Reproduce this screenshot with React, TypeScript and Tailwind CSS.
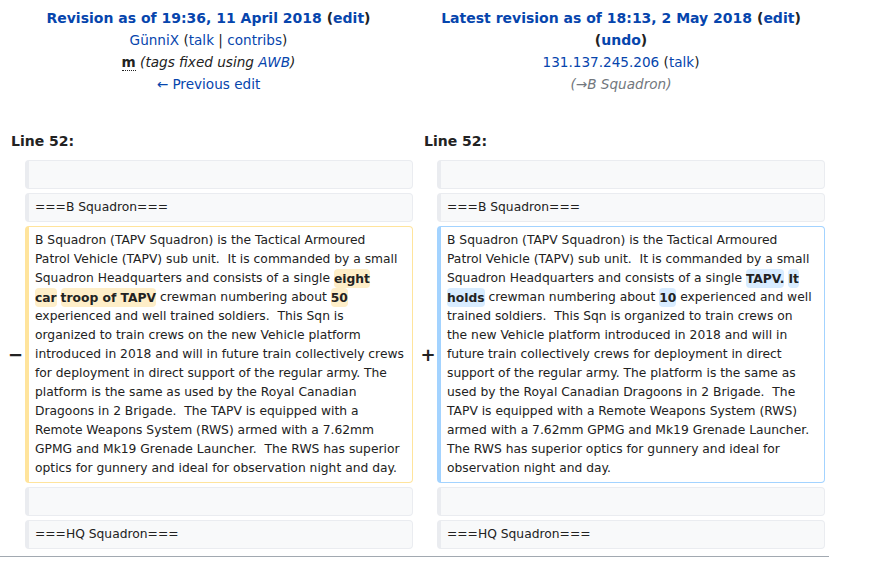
import React from "react"

const link = "text-[#0645ad]"

function Del({ children }: { children: React.ReactNode }) {
  return <span className="rounded-[4px] bg-[#feeec8] py-[2.5px] font-bold">{children}</span>
}

function Ins({ children }: { children: React.ReactNode }) {
  return <span className="rounded-[4px] bg-[#d8ecff] py-[2.5px] font-bold">{children}</span>
}

function Line({ kind, children }: { kind: "ctx" | "del" | "add"; children?: React.ReactNode }) {
  const tone =
    kind === "ctx"
      ? "border-[#eaecf0] bg-[#f8f9fa]"
      : kind === "del"
        ? "border-[#ffe49c] bg-white"
        : "border-[#a3d3ff] bg-white"
  return (
    <div
      className={`rounded-[4px] border border-l-4 px-[6px] py-[4px] text-[12.3px] leading-[19px] whitespace-pre text-[#222] ${tone}`}
    >
      {children ?? "\u00a0"}
    </div>
  )
}

function Marker({ children }: { children?: React.ReactNode }) {
  return (
    <div className="flex items-center justify-center pl-[6px] text-[18px] font-bold leading-[21px] text-[#222]">
      {children}
    </div>
  )
}

export default function App() {
  return (
    <div
      className="h-[572px] w-[874px] overflow-hidden bg-white text-[#222]"
      style={{ fontFamily: '"DejaVu Sans", sans-serif' }}
    >
      <div className="w-[829px] pt-[3px]">
        <div className="grid grid-cols-[17px_388px_16px_388px] gap-[4px] px-[4px] py-[4px]">
          {/* headers */}
          <div className="col-span-2 text-center text-[13.6px] leading-[22px]">
            <div className="text-[14px] font-bold">
              <span className={link}>Revision as of 19:36, 11 April 2018</span> (<span className={link}>edit</span>)
            </div>
            <div>
              <span className={link}>GünniX</span> (<span className={link}>talk</span> | <span className={link}>contribs</span>)
            </div>
            <div>
              <abbr className="font-bold no-underline border-b border-dotted border-[#222]">m</abbr>{" "}
              <span className="italic">
                (tags fixed using <span className={link}>AWB</span>)
              </span>
            </div>
            <div className={link}>← Previous edit</div>
          </div>
          <div className="col-span-2 text-center text-[13.6px] leading-[22px]">
            <div className="text-[14px] font-bold">
              <span className={link}>Latest revision as of 18:13, 2 May 2018</span> (<span className={link}>edit</span>)
            </div>
            <div className="text-[14px] font-bold">
              (<span className={link}>undo</span>)
            </div>
            <div>
              <span className={link}>131.137.245.206</span> (<span className={link}>talk</span>)
            </div>
            <div className="italic text-[#72777d]">(→B Squadron)</div>
          </div>

          {/* line numbers */}
          <div className="col-span-2 mt-[28px] px-[7px] pt-[3px] pb-[4px] text-[14px] font-bold leading-[22px]">
            Line 52:
          </div>
          <div className="col-span-2 mt-[28px] px-[7px] pt-[3px] pb-[4px] text-[14px] font-bold leading-[22px]">
            Line 52:
          </div>

          {/* context */}
          <Marker />
          <Line kind="ctx" />
          <Marker />
          <Line kind="ctx" />

          <Marker />
          <Line kind="ctx">===B Squadron===</Line>
          <Marker />
          <Line kind="ctx">===B Squadron===</Line>

          {/* changed paragraph, broken where the reference wraps */}
          <Marker>−</Marker>
          <Line kind="del">
            {"B Squadron (TAPV Squadron) is the Tactical Armoured\n"}
            {"Patrol Vehicle (TAPV) sub unit.  It is commanded by a small\n"}
            {"Squadron Headquarters and consists of a single "}
            <Del>eight</Del>
            {"\n"}
            <Del>car</Del> <Del>troop of TAPV</Del>
            {" crewman numbering about "}
            <Del>50</Del>
            {"\n"}
            {"experienced and well trained soldiers.  This Sqn is\n"}
            {"organized to train crews on the new Vehicle platform\n"}
            {"introduced in 2018 and will in future train collectively crews\n"}
            {"for deployment in direct support of the regular army. The\n"}
            {"platform is the same as used by the Royal Canadian\n"}
            {"Dragoons in 2 Brigade.  The TAPV is equipped with a\n"}
            {"Remote Weapons System (RWS) armed with a 7.62mm\n"}
            {"GPMG and Mk19 Grenade Launcher.  The RWS has superior\n"}
            {"optics for gunnery and ideal for observation night and day."}
          </Line>
          <Marker>+</Marker>
          <Line kind="add">
            {"B Squadron (TAPV Squadron) is the Tactical Armoured\n"}
            {"Patrol Vehicle (TAPV) sub unit.  It is commanded by a small\n"}
            {"Squadron Headquarters and consists of a single "}
            <Ins>TAPV.</Ins> <Ins>It</Ins>
            {"\n"}
            <Ins>holds</Ins>
            {" crewman numbering about "}
            <Ins>10</Ins>
            {" experienced and well\n"}
            {"trained soldiers.  This Sqn is organized to train crews on\n"}
            {"the new Vehicle platform introduced in 2018 and will in\n"}
            {"future train collectively crews for deployment in direct\n"}
            {"support of the regular army. The platform is the same as\n"}
            {"used by the Royal Canadian Dragoons in 2 Brigade.  The\n"}
            {"TAPV is equipped with a Remote Weapons System (RWS)\n"}
            {"armed with a 7.62mm GPMG and Mk19 Grenade Launcher.\n"}
            {"The RWS has superior optics for gunnery and ideal for\n"}
            {"observation night and day."}
          </Line>

          <Marker />
          <Line kind="ctx" />
          <Marker />
          <Line kind="ctx" />

          <Marker />
          <Line kind="ctx">===HQ Squadron===</Line>
          <Marker />
          <Line kind="ctx">===HQ Squadron===</Line>
        </div>
        <div className="mt-[3px] border-t border-[#a2a9b1]" />
      </div>
    </div>
  )
}
